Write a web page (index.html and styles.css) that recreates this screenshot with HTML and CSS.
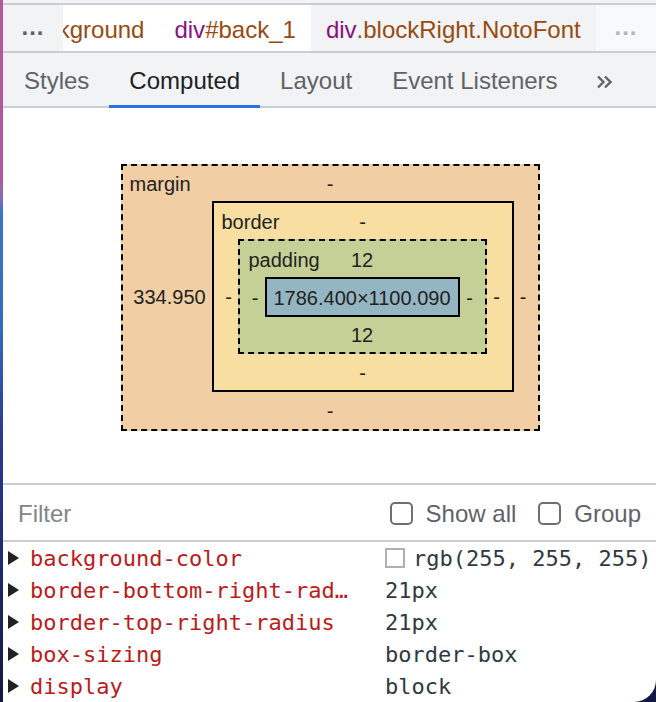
FILE: index.html
```html
<!DOCTYPE html>
<html>
<head>
<meta charset="utf-8">
<link rel="stylesheet" href="styles.css">
</head>
<body>
<div class="panel">
  <div class="topgap"></div>
  <div class="crumbs">
    <div class="crumb-more dark">...</div>
    <div class="crumb-list">
      <span class="crumb first"><span class="tag">background</span></span>
      <span class="crumb white"><span class="tagname">div</span><span class="tag">#back_1</span></span>
      <span class="crumb sel"><span class="tagname">div</span><span class="tag">.blockRight.NotoFont</span></span>
    </div>
    <div class="crumb-more light">...</div>
  </div>
  <div class="tabs">
    <div class="tab">Styles</div>
    <div class="tab active">Computed</div>
    <div class="tab">Layout</div>
    <div class="tab">Event Listeners</div>
    <div class="tab more"><svg width="17" height="14" viewBox="0 0 17 14"><path d="M2 1.5 L7.5 7 L2 12.5 M9 1.5 L14.5 7 L9 12.5" fill="none" stroke="#5f6368" stroke-width="2.4"/></svg></div>
  </div>
  <div class="boxmodel">
    <div class="bm margin">
      <div class="bm-top"><span class="bm-label">margin</span><span class="bm-val">-</span></div>
      <div class="bm-left wide">334.950</div>
      <div class="bm border">
        <div class="bm-top"><span class="bm-label">border</span><span class="bm-val">-</span></div>
        <div class="bm-left">-</div>
        <div class="bm padding">
          <div class="bm-top"><span class="bm-label">padding</span><span class="bm-val">12</span></div>
          <div class="bm-left">-</div>
          <div class="content">1786.400×1100.090</div>
          <div class="bm-right">-</div>
          <div class="bm-bottom">12</div>
        </div>
        <div class="bm-right">-</div>
        <div class="bm-bottom">-</div>
      </div>
      <div class="bm-right">-</div>
      <div class="bm-bottom">-</div>
    </div>
  </div>
  <div class="filter">
    <div class="filter-input">Filter</div>
    <label class="check"><span class="box"></span>Show all</label>
    <label class="check"><span class="box"></span>Group</label>
  </div>
  <div class="props">
    <div class="prop"><span class="tri"></span><span class="name">background-color</span><span class="value"><span class="swatch"></span>rgb(255, 255, 255)</span></div>
    <div class="prop"><span class="tri"></span><span class="name">border-bottom-right-radius</span><span class="value">21px</span></div>
    <div class="prop"><span class="tri"></span><span class="name">border-top-right-radius</span><span class="value">21px</span></div>
    <div class="prop"><span class="tri"></span><span class="name">box-sizing</span><span class="value">border-box</span></div>
    <div class="prop"><span class="tri"></span><span class="name">display</span><span class="value">block</span></div>
  </div>
</div>
</body>
</html>
```
FILE: styles.css
```css
html, body {
  margin: 0;
  padding: 0;
}
body {
  width: 656px;
  height: 702px;
  overflow: hidden;
  font-family: "Liberation Sans", Arial, sans-serif;
  background: linear-gradient(to bottom, #b4589c 0px, #b4589c 178px, #8a6ab8 195px, #3f72c9 212px, #3568c0 330px, #2a3c94 430px, #1f2a70 560px, #121842 702px);
}
.panel {
  margin-left: 3px;
  height: 702px;
  background: #fff;
  border-bottom-right-radius: 22px;
  overflow: hidden;
  display: flex;
  flex-direction: column;
}
.topgap {
  height: 3px;
  flex: none;
  background: #f1f3f4;
  border-bottom: 2px solid #cacdd1;
}
.crumbs {
  height: 46px;
  flex: none;
  display: flex;
  background: #f1f3f4;
  border-bottom: 2px solid #cacdd1;
  font-size: 24px;
}
.crumb-more {
  width: 60px;
  flex: none;
  display: flex;
  align-items: center;
  justify-content: center;
  font-weight: bold;
  letter-spacing: 1px;
  padding-bottom: 2px;
  box-sizing: border-box;
}
.crumb-more.dark { color: #5f6368; }
.crumb-more.light { color: #b4b6ba; background: #f8f9fa; }
.crumb-list {
  flex: 1;
  display: flex;
  overflow: hidden;
  white-space: nowrap;
}
.crumb {
  display: flex;
  align-items: center;
  padding: 3px 15px 0;
  background: #fff;
}
.crumb.first { margin-left: -44px; padding-left: 0; }
.crumb.sel { background: #f1f3f4; }
.tagname { color: #881280; }
.tag { color: #994a12; }
.tabs {
  height: 55px;
  flex: none;
  display: flex;
  padding-left: 1px;
  background: #f1f3f4;
  box-shadow: inset 0 -2px 0 #cacdd1;
  font-size: 24px;
}
.tab {
  padding: 1px 20px 0;
  display: flex;
  align-items: center;
  color: #5f6368;
}
.tab.active {
  color: #202124;
  box-shadow: inset 0 -3px 0 #2f6fdf;
}
.tab.more { padding-top: 2px; padding-left: 18px; }
.boxmodel {
  height: 377px;
  flex: none;
  box-sizing: border-box;
  padding-top: 4px;
  padding-left: 1px;
  border-bottom: 2px solid #cacdd1;
  display: flex;
  align-items: center;
  justify-content: center;
  font-size: 20px;
  color: #222;
}
.bm {
  display: grid;
  align-items: center;
}
.margin {
  border: 2px dashed #000;
  background: #f1cea4;
  grid-template-columns: 89px auto 24px;
  grid-template-rows: 35px auto 37px;
}
.border {
  border: 2px solid #000;
  background: #f8dea0;
  grid-template-columns: 24px auto 25px;
  grid-template-rows: 36px auto 36px;
}
.padding {
  border: 2px dashed #000;
  background: #c5d097;
  grid-template-columns: 25px auto 25px;
  grid-template-rows: 36px auto 35px;
}
.bm-top {
  grid-column: 1 / -1;
  display: grid;
  align-items: center;
  padding-top: 2px;
}
.bm-top > span { grid-area: 1 / 1; }
.bm-label { justify-self: start; }
.bm-val { justify-self: center; }
.margin > .bm-top .bm-label { padding-left: 7px; }
.border > .bm-top .bm-label { padding-left: 8px; }
.padding > .bm-top .bm-label { padding-left: 9px; }
.bm-left {
  text-align: center;
  padding-left: 6px;
  padding-top: 2px;
}
.bm-left.wide { padding-left: 5px; }
.bm-right {
  text-align: center;
  padding-right: 5px;
  padding-top: 2px;
}
.bm-bottom {
  grid-column: 1 / -1;
  text-align: center;
  padding-top: 2px;
}
.content {
  width: 195px;
  height: 40px;
  box-sizing: border-box;
  border: 2px solid #000;
  background: #94b6c2;
  display: flex;
  align-items: center;
  justify-content: center;
  padding-top: 2px;
}
.filter {
  height: 53px;
  flex: none;
  border-bottom: 2px solid #cacdd1;
  display: flex;
  align-items: center;
  padding: 2px 15px 0;
  font-size: 24px;
}
.filter-input {
  flex: 1;
  color: #80868b;
}
.check {
  display: flex;
  align-items: center;
  color: #5f6368;
}
.check + .check { margin-left: 22px; }
.box {
  width: 23px;
  height: 23px;
  box-sizing: border-box;
  border: 2px solid #6f6f6f;
  border-radius: 5px;
  margin-right: 13px;
  background: #fff;
}
.props {
  font-family: "DejaVu Sans Mono", "Liberation Mono", monospace;
  font-size: 22px;
}
.prop {
  height: 32px;
  display: flex;
  align-items: center;
  white-space: nowrap;
}
.tri {
  width: 0;
  height: 0;
  margin-left: 5px;
  border-top: 7px solid transparent;
  border-bottom: 7px solid transparent;
  border-left: 11px solid #202124;
  margin-right: 11px;
}
.name {
  width: 325px;
  overflow: hidden;
  text-overflow: ellipsis;
  color: #bb1b1b;
  margin-right: 30px;
}
.value {
  color: #303942;
  display: flex;
  align-items: center;
}
.swatch {
  width: 20px;
  height: 20px;
  box-sizing: border-box;
  border: 2px solid #b0b0b0;
  background: #fff;
  margin-right: 8px;
}
```
